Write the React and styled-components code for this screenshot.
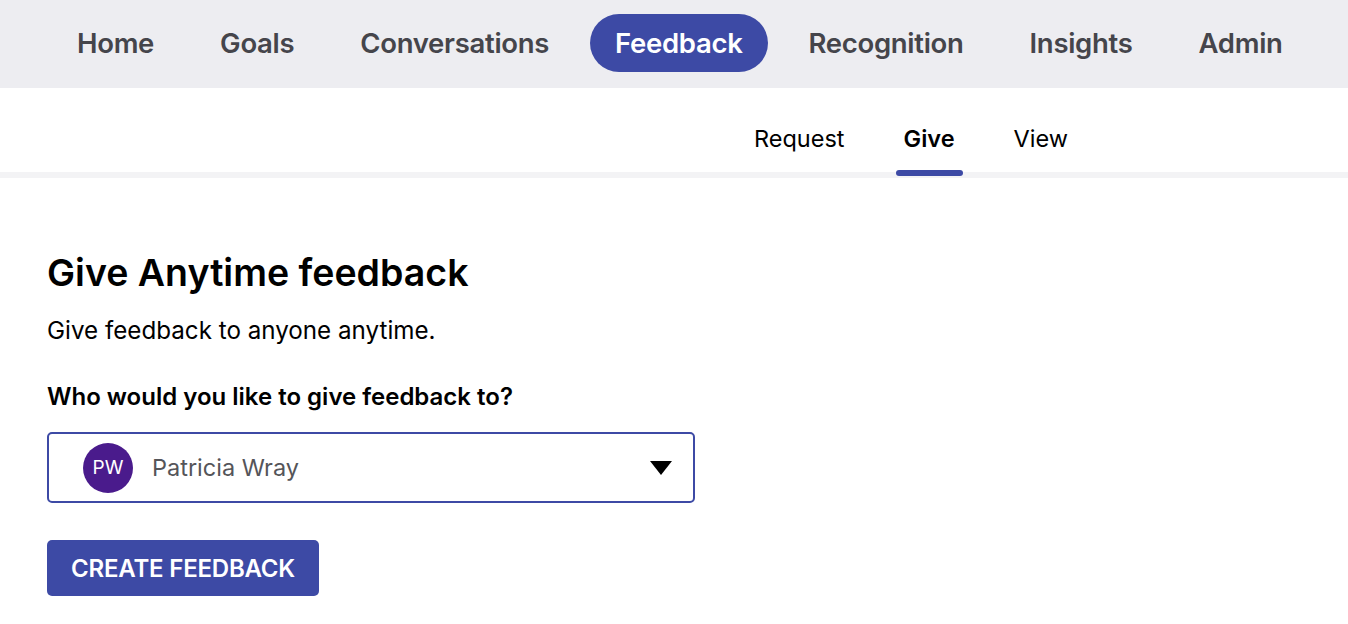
import styled, { createGlobalStyle } from "styled-components";

const GlobalStyle = createGlobalStyle`
  * { box-sizing: border-box; }
  body {
    margin: 0;
    background: #ffffff;
    font-family: "Inter", "Lato", sans-serif;
    color: #111;
  }
`;

const MAIN_NAV = ["Home", "Goals", "Conversations", "Feedback", "Recognition", "Insights", "Admin"];
const SUB_NAV = ["Request", "Give", "View"];

const App = () => {
  return (
    <Page>
      <GlobalStyle />
      <TopBar>
        {MAIN_NAV.map((item) => (
          <NavItem key={item} $active={item === "Feedback"}>
            {item}
          </NavItem>
        ))}
      </TopBar>
      <SubBar>
        {SUB_NAV.map((item) => (
          <Tab key={item} $active={item === "Give"}>
            {item}
          </Tab>
        ))}
      </SubBar>
      <Content>
        <Heading>Give Anytime feedback</Heading>
        <Intro>Give feedback to anyone anytime.</Intro>
        <Label>Who would you like to give feedback to?</Label>
        <Select>
          <Avatar>PW</Avatar>
          <Name>Patricia Wray</Name>
          <Caret viewBox="0 0 24 16" aria-hidden="true">
            <path d="M1 1 H23 L12 15 Z" fill="#000" />
          </Caret>
        </Select>
        <Button>CREATE FEEDBACK</Button>
      </Content>
    </Page>
  );
};

const Page = styled.div`
  width: 1348px;
  min-height: 624px;
  background: #fff;
`;

const TopBar = styled.nav`
  height: 88px;
  background: #ededf1;
  display: flex;
  align-items: center;
  gap: 16px;
  padding: 0 0 2px 52px;
`;

const NavItem = styled.a`
  height: 58px;
  padding: 0 25px;
  border-radius: 29px;
  display: flex;
  align-items: center;
  font-size: 27.5px;
  font-weight: 600;
  letter-spacing: -0.3px;
  color: ${(p) => (p.$active ? "#ffffff" : "#45454b")};
  background: ${(p) => (p.$active ? "#3d4aa5" : "transparent")};
  cursor: pointer;
`;

const SubBar = styled.div`
  height: 90px;
  display: flex;
  justify-content: flex-end;
  align-items: stretch;
  gap: 43px;
  padding-right: 272px;
  border-bottom: 6px solid #f3f3f5;
`;

const Tab = styled.a`
  position: relative;
  display: flex;
  align-items: center;
  padding: 16px 8px 0;
  font-size: 23.5px;
  font-weight: ${(p) => (p.$active ? 600 : 400)};
  color: #000;
  cursor: pointer;

  &::after {
    content: "";
    display: ${(p) => (p.$active ? "block" : "none")};
    position: absolute;
    left: 0;
    right: 0;
    bottom: -4px;
    height: 6px;
    border-radius: 3px;
    background: #3d4aa5;
  }
`;

const Content = styled.main`
  padding: 73px 47px 0;
`;

const Heading = styled.h1`
  margin: 0;
  font-size: 37.5px;
  line-height: 44px;
  font-weight: 600;
  letter-spacing: 0;
  color: #000;
`;

const Intro = styled.p`
  margin: 21px 0 0;
  font-size: 24.2px;
  line-height: 30px;
  color: #000;
`;

const Label = styled.p`
  margin: 36px 0 0;
  font-size: 24px;
  line-height: 30px;
  font-weight: 600;
  color: #000;
`;

const Select = styled.div`
  margin-top: 20px;
  width: 648px;
  height: 71px;
  border: 2px solid #3d4aa5;
  border-radius: 5px;
  display: flex;
  align-items: center;
  padding: 0 20px 0 34px;
`;

const Avatar = styled.span`
  width: 50px;
  height: 50px;
  border-radius: 50%;
  background: #4a1b8c;
  color: #fff;
  display: flex;
  align-items: center;
  justify-content: center;
  font-size: 19px;
  flex-shrink: 0;
`;

const Name = styled.span`
  margin-left: 19px;
  flex: 1;
  font-size: 23.5px;
  color: #555559;
`;

const Caret = styled.svg`
  width: 24px;
  height: 16px;
`;

const Button = styled.button`
  margin-top: 37px;
  width: 272px;
  height: 56px;
  border: none;
  border-radius: 5px;
  background: #3d4aa5;
  color: #fff;
  font-family: inherit;
  font-size: 24px;
  font-weight: 600;
  letter-spacing: -0.2px;
  cursor: pointer;
`;

export default App;
